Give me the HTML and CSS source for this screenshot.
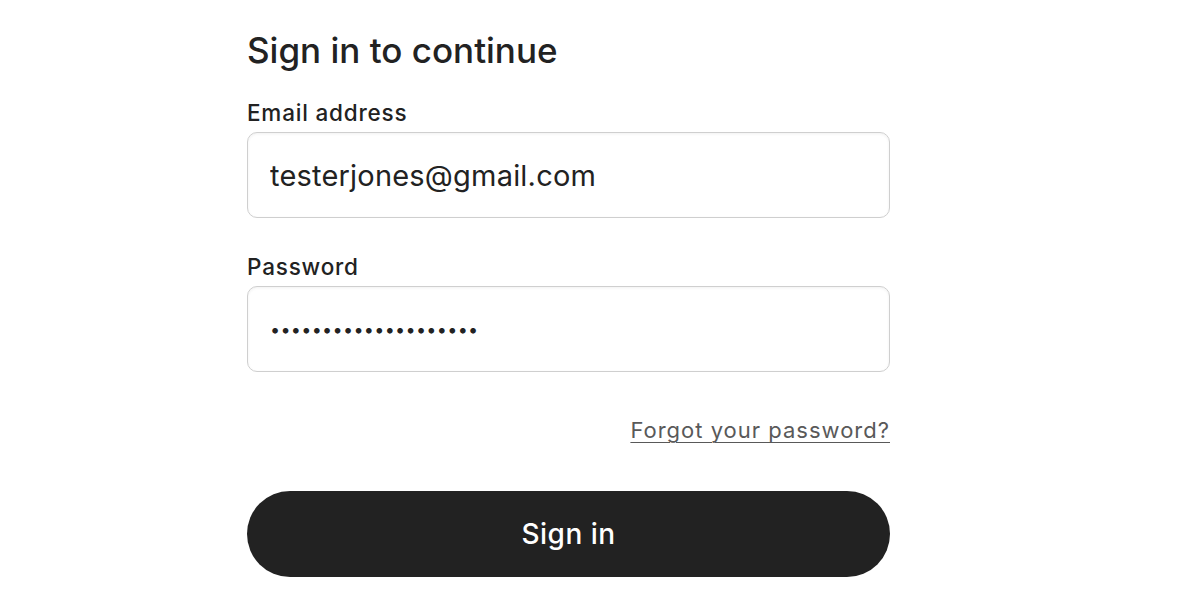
FILE: index.html
```html
<!DOCTYPE html>
<html lang="en">
<head>
<meta charset="utf-8">
<title>Sign in</title>
<link rel="stylesheet" href="styles.css">
</head>
<body>
<main class="page">
  <form class="signin">
    <h1 class="title">Sign in to continue</h1>
    <div class="field field-email">
      <label class="label" for="email">Email address</label>
      <input class="input" id="email" type="email" value="testerjones@gmail.com">
    </div>
    <div class="field">
      <label class="label" for="pw">Password</label>
      <input class="input input-pw" id="pw" type="password" value="aaaaaaaaaaaaaaaaaaaa">
    </div>
    <div class="forgot-row">
      <a class="forgot" href="#">Forgot your password?</a>
    </div>
    <button class="btn" type="button">Sign in</button>
  </form>
</main>
</body>
</html>
```
FILE: styles.css
```css
html, body {
  margin: 0;
  padding: 0;
  background: #ffffff;
}
body {
  font-family: Inter, "Noto Sans", "Liberation Sans", sans-serif;
  color: #222222;
}
.page {
  padding: 26px 0 0 247px;
}
.signin {
  width: 643px;
  display: flex;
  flex-direction: column;
}
.title {
  margin: 0 0 24px 0;
  font-size: 35px;
  line-height: 48px;
  font-weight: 500;
  color: #222222;
}
.field {
  display: flex;
  flex-direction: column;
}
.field-email {
  margin-bottom: 34px;
}
.label {
  font-size: 22.5px;
  line-height: 30px;
  font-weight: 500;
  letter-spacing: 0.8px;
  color: #222222;
  margin-bottom: 4px;
}
.input {
  box-sizing: border-box;
  height: 86px;
  width: 100%;
  border: 1px solid #cfcfcf;
  border-radius: 10px;
  padding: 0 22px;
  font-family: inherit;
  font-size: 29px;
  letter-spacing: 0.2px;
  color: #222222;
  background: #ffffff;
  box-shadow: inset 0 1px 3px rgba(0,0,0,0.06);
  outline: none;
}
.input-pw {
  font-size: 18px;
  letter-spacing: 0.3px;
}
.forgot-row {
  display: flex;
  justify-content: flex-end;
  margin-top: 43px;
}
.forgot {
  font-size: 22px;
  line-height: 30px;
  color: #595959;
  text-decoration: underline;
  text-underline-offset: 4px;
  text-decoration-thickness: 1px;
  letter-spacing: 1px;
}
.btn {
  margin-top: 46px;
  height: 86px;
  width: 100%;
  border: none;
  border-radius: 43px;
  background: #222222;
  color: #ffffff;
  font-family: inherit;
  font-size: 28px;
  font-weight: 500;
  letter-spacing: 0.5px;
  cursor: pointer;
}
```
